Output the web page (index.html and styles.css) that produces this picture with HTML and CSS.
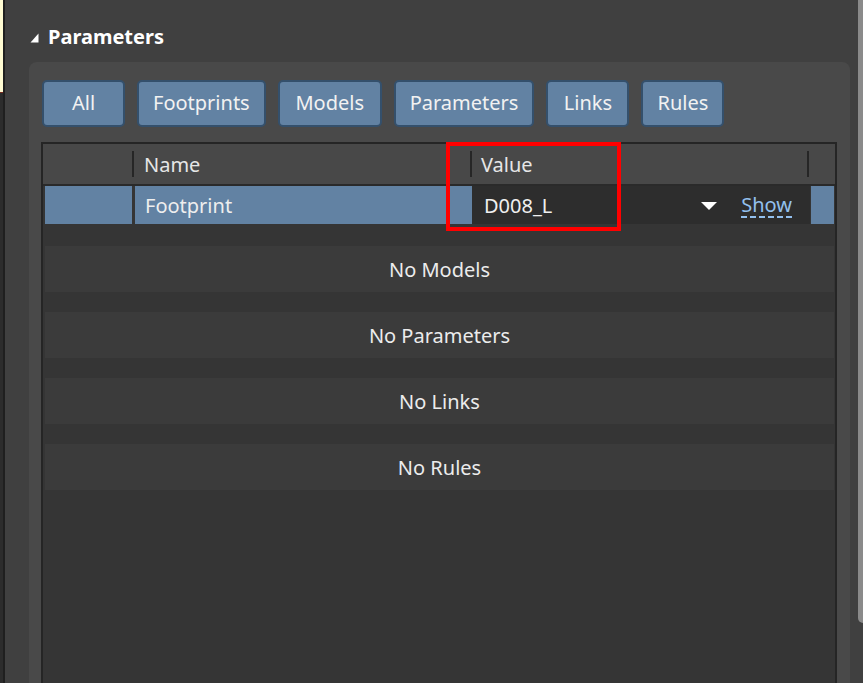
FILE: index.html
```html
<!DOCTYPE html>
<html lang="en">
<head>
    <meta charset="UTF-8">
    <meta name="viewport" content="width=device-width, initial-scale=1.0">
    <title>Parameters</title>
    <link rel="stylesheet" href="styles.css">
</head>
<body>
    <div class="window">
        <div class="edge">
            <div class="edge-note"></div>
            <div class="edge-dark"></div>
        </div>
        <div class="edge-line"></div>

        <div class="panel">
            <div class="title">
                <svg class="caret" width="9" height="10" viewBox="0 0 9 10">
                    <polygon points="8.5,0.5 8.5,9.5 0.5,9.5" fill="#ffffff"/>
                </svg>
                <span>Parameters</span>
            </div>

            <div class="group">
                <div class="filters">
                    <button class="filter">All</button>
                    <button class="filter">Footprints</button>
                    <button class="filter filter-models">Models</button>
                    <button class="filter filter-params">Parameters</button>
                    <button class="filter">Links</button>
                    <button class="filter">Rules</button>
                </div>

                <div class="grid">
                    <div class="grid-head">
                        <div class="col col-pad"></div>
                        <div class="col col-name">Name</div>
                        <div class="col col-value">Value</div>
                        <div class="col col-end"></div>
                    </div>

                    <div class="grid-row selected">
                        <div class="cell cell-pad"></div>
                        <div class="cell cell-name">Footprint</div>
                        <div class="cell cell-value">
                            <span class="value-text">D008_L</span>
                            <svg class="drop" width="16" height="8" viewBox="0 0 16 8">
                                <polygon points="0,0 16,0 8,8" fill="#ffffff"/>
                            </svg>
                            <a class="show" href="#">Show</a>
                        </div>
                        <div class="cell cell-end"></div>
                    </div>

                    <div class="empty">No Models</div>
                    <div class="empty">No Parameters</div>
                    <div class="empty">No Links</div>
                    <div class="empty">No Rules</div>
                </div>
            </div>
        </div>

        <div class="scroll"></div>
    </div>

    <div class="highlight"></div>
</body>
</html>
```

FILE: styles.css
```css
html, body {
    margin: 0;
    height: 100%;
}

body {
    background-color: #404040;
    font-family: "Noto Sans", "Open Sans", sans-serif;
    color: #e8e8e8;
    overflow: hidden;
}

.window {
    display: flex;
    height: 683px;
}

/* strip of the neighbouring window on the left */
.edge {
    width: 3px;
    display: flex;
    flex-direction: column;
}

.edge-note {
    height: 92px;
    background-color: #fffbd2;
    border-bottom: 1px solid #7b2a1e;
}

.edge-dark {
    flex: 1;
    background-color: #2c2c2c;
}

.edge-line {
    width: 2px;
    background-color: #1f1f1f;
}

.panel {
    flex: 1;
    display: flex;
    flex-direction: column;
    padding: 0 8px 0 24px;
    min-width: 0;
}

.scroll {
    width: 5px;
    background-color: #404040;
}

.scroll::before {
    content: "";
    display: block;
    height: 623px;
    background-color: #8a8a8a;
    border-bottom-left-radius: 5px;
}

.title {
    height: 62px;
    display: flex;
    align-items: center;
    gap: 9px;
    padding-left: 1px;
    padding-top: 10px;
    box-sizing: border-box;
    font-size: 20px;
    font-weight: bold;
    color: #ffffff;
}

.caret {
    margin-top: 4px;
}

.group {
    flex: 1;
    background-color: #494949;
    border-radius: 8px 8px 0 0;
    padding: 18px 13px 0 12px;
    display: flex;
    flex-direction: column;
}

.filters {
    display: flex;
    gap: 12px;
    margin-left: 1px;
}

.filter {
    height: 47px;
    padding: 0 14px 3px;
    min-width: 83px;
    background-color: #6282a3;
    border: 2px solid #34506c;
    border-radius: 5px;
    color: #f2f2f2;
    font-family: inherit;
    font-size: 20px;
}

.filter-models {
    min-width: 104px;
}

.filter-params {
    min-width: 140px;
}

.grid {
    flex: 1;
    margin-top: 15px;
    border: 2px solid #252525;
    border-bottom: none;
    background-color: #353535;
}

.grid-head {
    display: flex;
    height: 40px;
    background-color: #484848;
    border-bottom: 2px solid #2a2a2a;
}

.col {
    display: flex;
    align-items: center;
    font-size: 20px;
    color: #e6e6e6;
    box-sizing: border-box;
}

.col-pad {
    width: 89px;
}

.col-name,
.col-value,
.col-end {
    border-left: 2px solid #262626;
    border-image: linear-gradient(#484848 8px, #262626 8px, #262626 32px, #484848 32px) 1;
}

.col-name {
    width: 338px;
    padding-left: 10px;
}

.col-value {
    width: 337px;
    padding-left: 9px;
}

.col-end {
    flex: 1;
}

.grid-row {
    display: flex;
    height: 38px;
    padding-left: 2px;
    margin-right: 1px;
}

.cell {
    display: flex;
    align-items: center;
    box-sizing: border-box;
    font-size: 20px;
}

.selected .cell-pad,
.selected .cell-name,
.selected .cell-end {
    background-color: #6282a3;
}

.cell-pad {
    width: 87px;
}

.cell-name {
    width: 337px;
    margin-left: 3px;
    padding-left: 10px;
    color: #eeeeee;
}

.cell-value {
    width: 338px;
    background-color: #2d2d2d;
    padding: 0 18px 0 12px;
    color: #f0f0f0;
}

.value-text {
    flex: 1;
}

.drop {
    margin-right: 24px;
    margin-top: 1px;
}

.show {
    color: #93c0ee;
    text-decoration: none;
    border-bottom: 2px dashed #93c0ee;
    line-height: 22px;
    margin-top: 2px;
}

.cell-end {
    flex: 1;
    margin-left: 1px;
}

.empty {
    height: 46px;
    margin: 20px 1px 0 2px;
    padding-top: 1px;
    box-sizing: border-box;
    background-color: #3b3b3b;
    display: flex;
    align-items: center;
    justify-content: center;
    font-size: 20px;
    color: #ececec;
}

.grid-row + .empty {
    margin-top: 22px;
}

/* red annotation frame drawn over the screenshot */
.highlight {
    position: absolute;
    left: 446px;
    top: 142px;
    width: 167px;
    height: 81px;
    border: 4px solid #ff0000;
}
```
